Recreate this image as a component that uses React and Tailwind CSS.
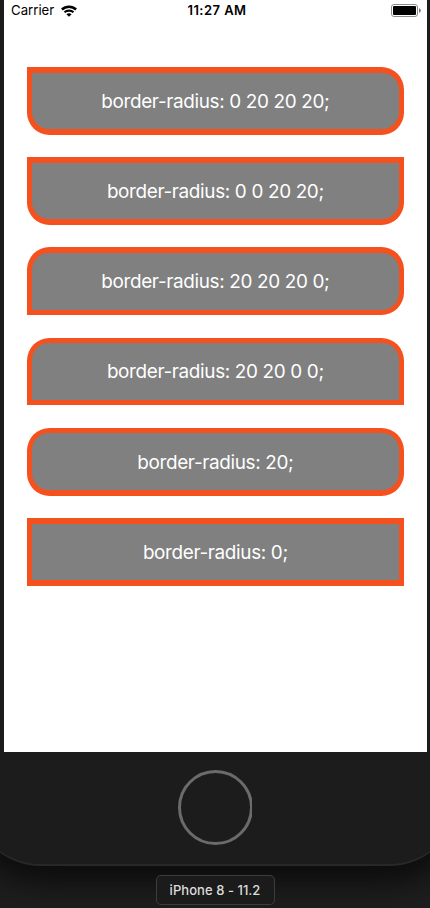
const boxes = [
  { label: "border-radius: 0 20 20 20;", outer: "rounded-[0_22.6px_22.6px_22.6px]", inner: "rounded-[0_17px_17px_17px]" },
  { label: "border-radius: 0 0 20 20;", outer: "rounded-[0_0_22.6px_22.6px]", inner: "rounded-[0_0_17px_17px]" },
  { label: "border-radius: 20 20 20 0;", outer: "rounded-[22.6px_22.6px_22.6px_0]", inner: "rounded-[17px_17px_17px_0]" },
  { label: "border-radius: 20 20 0 0;", outer: "rounded-[22.6px_22.6px_0_0]", inner: "rounded-[17px_17px_0_0]" },
  { label: "border-radius: 20;", outer: "rounded-[22.6px]", inner: "rounded-[17px]" },
  { label: "border-radius: 0;", outer: "rounded-none", inner: "rounded-none" },
];

function WifiIcon() {
  return (
    <svg className="h-[12px] w-[16px]" viewBox="0 0 16 12" fill="none" stroke="#000" strokeWidth="2.5">
      <path d="M0.9 4.5C4.9 0.7 11.1 0.7 15.1 4.5" />
      <path d="M3.5 7.3C6 5 10 5 12.5 7.3" strokeWidth="2.2" />
      <path d="M8 11.8L5.4 9.3C6.8 7.9 9.2 7.9 10.6 9.3Z" fill="#000" stroke="none" />
    </svg>
  );
}

function BatteryIcon() {
  return (
    <svg className="h-[13px] w-[30px]" viewBox="0 0 30 13">
      <rect x="0.5" y="0.5" width="26" height="12" rx="2.5" fill="none" stroke="#8c8c8c" />
      <rect x="2" y="2" width="23" height="9" rx="1" fill="#000" />
      <path d="M28 4.2C29.2 4.6 29.8 5.5 29.8 6.5S29.2 8.4 28 8.8Z" fill="#777" />
    </svg>
  );
}

function StatusBar() {
  return (
    <div className="grid h-[21px] grid-cols-3 items-center pl-[7px] pr-[6px] text-[13.2px] leading-[21px] text-black">
      <div className="flex items-center gap-[6.5px]">
        <span>Carrier</span>
        <WifiIcon />
      </div>
      <div className="pl-[2px] text-center text-[13px] font-semibold tracking-[0.45px] whitespace-nowrap">11:27 AM</div>
      <div className="flex justify-end">
        <BatteryIcon />
      </div>
    </div>
  );
}

export default function App() {
  return (
    <div className="flex h-[908px] w-[430px] flex-col items-center overflow-hidden bg-[#1e1e1e] font-['Inter',sans-serif]">
      <div className="h-[866px] w-[488px] shrink-0 rounded-b-[70px] border-b-2 border-[#282828] bg-[#1c1c1c] shadow-[0_12px_30px_4px_#0c0c0c]">
        <div className="ml-[33px] h-[752px] w-[423px] bg-white">
          <StatusBar />
          <div className="flex flex-col gap-[22.6px] pl-[22.6px] pr-[22.9px] pt-[46px]">
            {boxes.map((b) => (
              <div key={b.label} className={`h-[67.65px] bg-[#f4511e] p-[5.5px] ${b.outer}`}>
                <div className={`flex h-full items-center justify-center bg-[#808080] pt-[2px] text-[18.9px] font-normal tracking-[-0.34px] text-white ${b.inner}`}>
                  {b.label}
                </div>
              </div>
            ))}
          </div>
        </div>
        <div className="ml-[207px] mt-[18px] h-[75px] w-[74px] overflow-hidden">
          <div className="h-[75px] w-[75px] rounded-full border-[3px] border-[#6b6b6b]" />
        </div>
      </div>
      <div className="mt-[9px] flex h-[30px] w-[119px] shrink-0 items-center justify-center rounded-[5px] border border-[#3c3c3c] bg-[#1b1b1b] pt-[2px] text-[13px] font-medium tracking-[0.05px] text-[#dcdcdc]">
        iPhone 8 - 11.2
      </div>
    </div>
  );
}
